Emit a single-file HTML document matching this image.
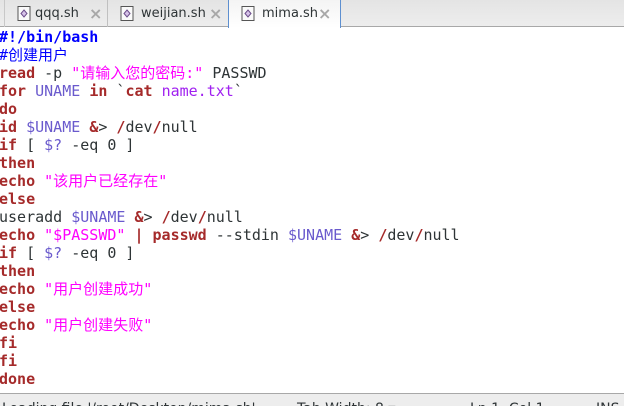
<!DOCTYPE html>
<html><head><meta charset="utf-8"><style>
*{margin:0;padding:0;box-sizing:border-box}
body{width:624px;height:406px;overflow:hidden;background:#fff;position:relative;font-family:"DejaVu Sans","Noto Sans CJK SC",sans-serif}
.tabbar{position:absolute;left:0;top:0;width:624px;height:27px;background:linear-gradient(#e4e4e4,#ededed);border-bottom:1px solid #a8a8a8}
.tab{position:absolute;top:0;height:27px;font-size:13px;color:#2e3436;line-height:27px;border-left:1px solid #c0c0c0}
.tab.active{background:linear-gradient(#f4f4f4,#fff);border-left:1px solid #5d8fd0;border-right:1px solid #5d8fd0;height:28px}
.tab .ic{position:absolute;left:12px;top:6px;width:14px;height:15px}
.tab .nm{position:absolute;left:33px;top:0}
.tab .x{position:absolute;top:0;color:#a8a8a8;font-size:16px;font-weight:bold}
.code{position:absolute;left:-1px;top:28px;font-family:"DejaVu Sans Mono","Noto Sans CJK SC",monospace;font-size:15px;line-height:18px;color:#2e3436;white-space:pre}
.k{color:#a52a2a;font-weight:bold}
.v{color:#6a5acd}
.s{color:#ff00ff}
.c{color:#0000ff}
.sb{color:#0000ff;font-weight:bold}
.p{color:#a020f0}
.status{position:absolute;left:0;top:393px;width:624px;height:13px;background:#ededed;border-top:1px solid #a8a8a8;font-size:14px;color:#2e3436;white-space:pre;line-height:16px;overflow:hidden}
.status span{position:absolute;top:7px}
</style></head><body>
<div class="tabbar">
 <div class="tab" style="left:4px;width:103px;border-left:1px solid #c8c8c8">
  <svg class="ic" viewBox="0 0 14 15"><rect x="1" y="0.5" width="12" height="14" fill="#fafafa" stroke="#555"/><path d="M7 4 L10 7.5 L7 11 L4 7.5Z" fill="#d6c2e8" stroke="#6b4c8a"/></svg>
  <span class="nm" style="left:30px">qqq.sh</span><span class="x" style="left:84px">×</span></div>
 <div class="tab" style="left:107px;width:120px">
  <svg class="ic" viewBox="0 0 14 15"><rect x="1" y="0.5" width="12" height="14" fill="#fafafa" stroke="#555"/><path d="M7 4 L10 7.5 L7 11 L4 7.5Z" fill="#d6c2e8" stroke="#6b4c8a"/></svg>
  <span class="nm">weijian.sh</span><span class="x" style="left:101px">×</span></div>
 <div class="tab active" style="left:228px;width:113px">
  <svg class="ic" viewBox="0 0 14 15"><rect x="1" y="0.5" width="12" height="14" fill="#fafafa" stroke="#555"/><path d="M7 4 L10 7.5 L7 11 L4 7.5Z" fill="#d6c2e8" stroke="#6b4c8a"/></svg>
  <span class="nm">mima.sh</span><span class="x" style="left:89px">×</span></div>
</div>
<div class="code"><span class="sb">#!/bin/bash</span>
<span class="c">#创建用户</span>
<span class="k">read</span> -p <span class="s">"请输入您的密码:"</span> PASSWD
<span class="k">for</span> <span class="v">UNAME</span> <span class="k">in</span> `<span class="k">cat</span> <span class="p">name.txt</span>`
<span class="k">do</span>
<span class="k">id</span> <span class="v">$UNAME</span> <span class="k">&amp;</span>&gt; <span class="k">/</span>dev<span class="k">/</span>null
<span class="k">if</span> [ <span class="v">$?</span> -eq 0 ]
<span class="k">then</span>
<span class="k">echo</span> <span class="s">"该用户已经存在"</span>
<span class="k">else</span>
useradd <span class="v">$UNAME</span> <span class="k">&amp;</span>&gt; <span class="k">/</span>dev<span class="k">/</span>null
<span class="k">echo</span> <span class="s">"$PASSWD"</span> <span class="k">|</span> <span class="k">passwd</span> --stdin <span class="v">$UNAME</span> <span class="k">&amp;</span>&gt; <span class="k">/</span>dev<span class="k">/</span>null
<span class="k">if</span> [ <span class="v">$?</span> -eq 0 ]
<span class="k">then</span>
<span class="k">echo</span> <span class="s">"用户创建成功"</span>
<span class="k">else</span>
<span class="k">echo</span> <span class="s">"用户创建失败"</span>
<span class="k">fi</span>
<span class="k">fi</span>
<span class="k">done</span></div>
<div class="status"><span style="left:2px">Loading file '/root/Desktop/mima.sh'...</span><span style="left:297px">Tab Width: 8 ▾</span><span style="left:470px">Ln 1, Col 1</span><span style="left:596px">INS</span></div>
</body></html>
